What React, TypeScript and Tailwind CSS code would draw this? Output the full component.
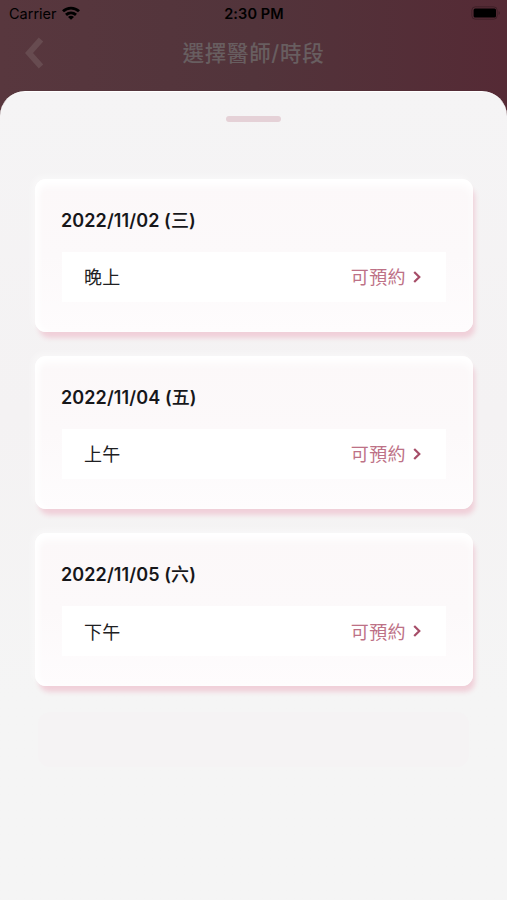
import React from 'react'

type TypedSchedule = {
  date: string
  weekday: string
  period: string
}

const schedules: TypedSchedule[] = [
  { date: '2022/11/02', weekday: '三', period: '晚上' },
  { date: '2022/11/04', weekday: '五', period: '上午' },
  { date: '2022/11/05', weekday: '六', period: '下午' },
]

const StatusBar = () => {
  return (
    <div className="grid grid-cols-3 items-center h-7 pl-[9px] pr-1.5 text-black text-[14.5px] leading-none">
      <div className="flex items-center gap-[5px]">
        <span>Carrier</span>
        <svg viewBox="0 0 18 14" className="w-[18px] h-[14px] -mt-[3px]" fill="none" stroke="currentColor" strokeWidth="2.9">
          <path d="M1 5.3C5.6 1.1 12.4 1.1 17 5.3" />
          <path d="M4 8.9c2.9-2.6 7.1-2.6 10 0" />
          <path d="M9 13.8 6 10.9c1.7-1.6 4.3-1.6 6 0z" fill="currentColor" stroke="none" />
        </svg>
      </div>
      <span className="-ml-0.5 text-center font-semibold tracking-[0.1px]">2:30 PM</span>
      <svg viewBox="0 0 30 14" className="w-[30px] h-[14px] -mt-0.5 justify-self-end">
        <rect x=".8" y=".8" width="25.4" height="12.4" rx="3.6" fill="none" stroke="#000" strokeOpacity=".25" />
        <rect x="2.6" y="2.4" width="22.4" height="9.2" rx="1.5" fill="#000" />
        <path d="M27.6 5v4c1.6-.6 1.6-3.4 0-4z" fill="#000" fillOpacity=".3" />
      </svg>
    </div>
  )
}

const Header = () => {
  return (
    <div className="grid grid-cols-[60px_1fr_60px] items-center h-[49px]">
      <button className="pl-[25px] text-[#674b50]" aria-label="返回">
        <svg viewBox="0 0 19 32" className="w-[19px] h-8" fill="none" stroke="currentColor" strokeWidth="6">
          <path d="M16 2.5 4 16l12 13.5" />
        </svg>
      </button>
      <h1 className="pt-0.5 text-center text-[21.5px] leading-none text-[#685e60] font-medium tracking-[0.7px]">選擇醫師/時段</h1>
    </div>
  )
}

const ScheduleCard = ({ item }: { item: TypedSchedule }) => {
  return (
    <li className="h-[153px] px-[27px] pt-[29px] rounded-[11px] bg-linear-to-b from-[#fcf8f9] via-[#fcf9fa] to-[#fefcfd] shadow-[3px_7px_5px_-1px_#f0d0d9,-3px_-3px_6px_rgba(255,255,255,0.4),inset_0_7px_8px_#fff,inset_4px_0_6px_#fff]">
      <h2 className="h-6 pt-px -ml-px text-[18px] leading-6 font-semibold tracking-[0.1px] text-[#17171a]">
        {item.date} (<span className="font-medium">{item.weekday}</span>)
      </h2>
      <button className="mt-5 flex items-center justify-between w-full h-[50px] pt-0.5 pl-[22px] pr-[25px] bg-white">
        <span className="text-[18px] tracking-[0.3px] text-[#202022]">{item.period}</span>
        <span className="flex items-center gap-[7px] text-[18px] text-[#bd7186]">
          <span className="tracking-[0.4px]">可預約</span>
          <svg viewBox="0 0 8 12" className="w-2 h-3 -mt-0.5" fill="none" stroke="#a64d68" strokeWidth="2.2">
            <path d="m1.2 1 5.1 5-5.1 5" />
          </svg>
        </span>
      </button>
    </li>
  )
}

const App = () => {
  return (
    <div className="flex flex-col h-[900px] w-full overflow-hidden bg-linear-to-r from-[#58373e] via-[#52343b] to-[#552a35] font-[Inter,'Noto_Sans_CJK_TC',sans-serif]">
      <StatusBar />
      <Header />
      <main className="mt-[14px] flex-1 flex flex-col rounded-t-[25px] border-t border-white bg-linear-to-b from-[#f5f4f5] via-[#f4f2f3] via-40% to-[#f5f5f5] to-75%">
        <div className="mt-[23.5px] mx-auto w-[55px] h-1.5 rounded-full bg-[#e5d1d7]" />
        <ul className="mt-[57px] ml-[35px] w-[438px] flex flex-col gap-[24.4px]">
          {schedules.map((item) => (
            <ScheduleCard key={item.date} item={item} />
          ))}
        </ul>
        <div className="mt-[26px] mx-[38px] h-[55px] rounded-xl bg-[#f5f3f4]" />
      </main>
    </div>
  )
}

export default App
